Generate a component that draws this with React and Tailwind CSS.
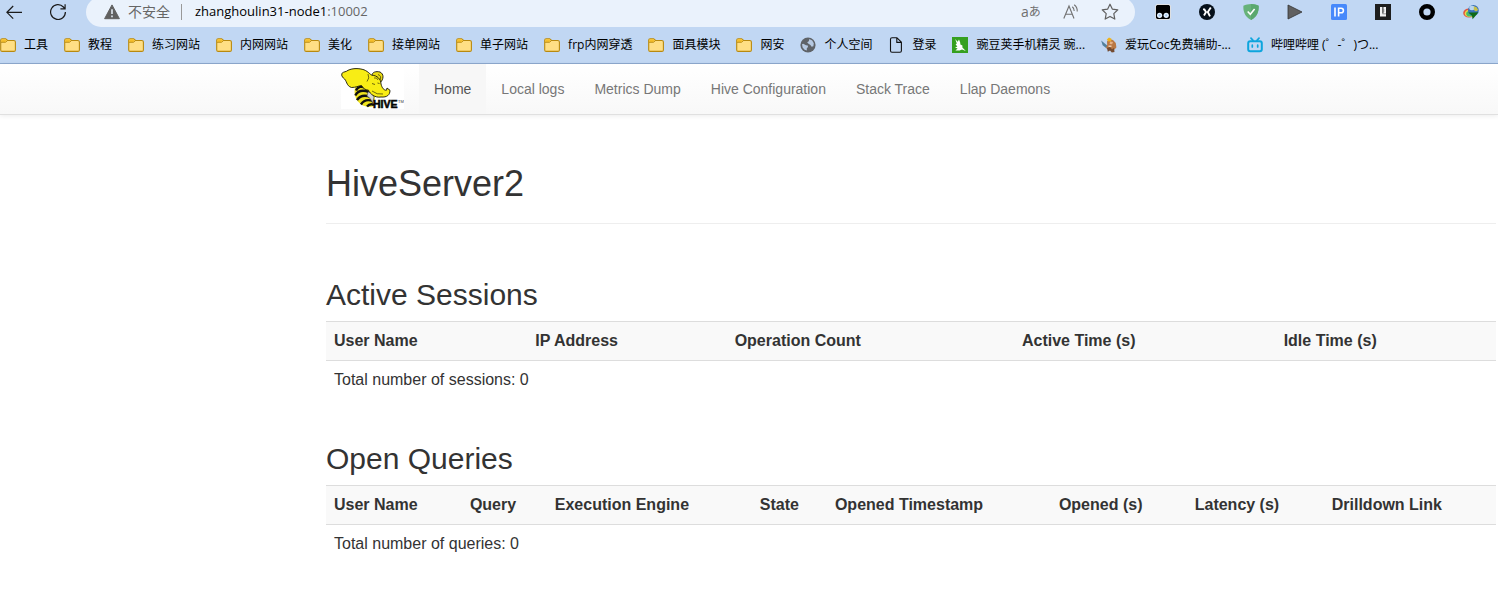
import React from "react";

function FolderIcon() {
  return (
    <svg viewBox="0 0 16 16" className="size-4 shrink-0" aria-hidden="true">
      <path d="M.7 3.2Q.7 1.7 2.2 1.7H5.6L7.6 3.5H13.8Q15.4 3.5 15.4 5V12.9Q15.4 14.4 13.9 14.4H2.2Q.7 14.4.7 12.9Z" fill="#ffdf85" stroke="#b8890f" strokeWidth="1.1" />
      <path d="M1.2 3.4Q1.2 2.2 2.3 2.2H5.4L6.9 3.6 5.4 5H1.2Z" fill="#f5bf2b" />
      <path d="M1 5.3H5.5L7.5 3.6" fill="none" stroke="#b8890f" strokeWidth="0.9" />
    </svg>
  );
}

function GlobeIcon() {
  return (
    <svg viewBox="0 0 16 16" className="size-4 shrink-0" aria-hidden="true">
      <circle cx="8" cy="8" r="7.6" fill="#5f6368" />
      <path d="M2 7.2 3.2 6.8 6 8.2 7.8 8.4 8 10 6.8 11.2 6.8 13.6 4.6 12.8 2.6 10.4Z" fill="#b6c9e2" />
      <path d="M9.3 2.1 12.2 3.4 13.8 6.2 13.4 9.2 11.6 9.8 10.4 8 8.2 6.6 7.2 5.2 8.8 4.2Z" fill="#b6c9e2" />
    </svg>
  );
}

function PageIcon() {
  return (
    <svg viewBox="0 0 16 16" className="size-4 shrink-0" fill="none" stroke="#111" strokeWidth="1.1" strokeLinejoin="round" aria-hidden="true">
      <path d="M4 .8H9L13.4 5.2V13.8Q13.4 15.3 12 15.3H4Q2.5 15.3 2.5 13.8V2.3Q2.5.8 4 .8ZM8.8 1V5.4H13.2" />
    </svg>
  );
}

function PeaIcon() {
  return (
    <svg viewBox="0 0 16 16" className="size-4 shrink-0" aria-hidden="true">
      <path d="M0 0H16V16H0Z" fill="#35a01f" />
      <path d="M3.2 2 5.6 4.8 7 2.6 8.2 5.4 8.4 7.4 10.4 8.6 10.4 10.6 13.8 14 10 12.4 7.6 13.4 3.4 13.6 5.6 11.6 3 10.6 5.4 9.4 3.6 7.4 4.8 6.4Z" fill="#fff" />
    </svg>
  );
}

function WarriorIcon() {
  return (
    <svg viewBox="0 0 16 16" className="size-4 shrink-0" aria-hidden="true">
      <path d="M.2 3.6 6.5 8.8 5.4 11.2 1.6 8.2Z" fill="#52809c" />
      <path d="M6 4.5 8 2 12 3 14.8 6 15.4 10.5 13.5 12.5H7L5 11 6.2 8Z" fill="#b97845" />
      <path d="M5.8 2.5 8 .4 10.5 1.7 10 4.2 7.4 4.6Z" fill="#efb31c" />
      <path d="M9 4.5 12 5 11.2 7.2 8.6 7Z" fill="#e7b186" />
      <path d="M6 11 9 10 11 12.2 13 11 13.5 15 10.8 15.6 9 13.6 6.8 14.8Z" fill="#744b31" />
      <path d="M7.5 8.5H10.5V10H7.5Z" fill="#e9cfb6" />
    </svg>
  );
}

function BiliIcon() {
  return (
    <svg viewBox="0 0 16 16" className="size-4 shrink-0" fill="none" stroke="#0da5dd" strokeLinecap="round" aria-hidden="true">
      <rect x="1.2" y="4.2" width="13.6" height="10" rx="2" strokeWidth="2" />
      <path d="M4 1.2 6 3.3M12 1.2 10 3.3" strokeWidth="1.7" />
      <path d="M5.3 8.2V10M10.7 8.2V10" strokeWidth="1.7" />
    </svg>
  );
}

const bookmarks = [
  { label: "工具", Icon: FolderIcon },
  { label: "教程", Icon: FolderIcon },
  { label: "练习网站", Icon: FolderIcon },
  { label: "内网网站", Icon: FolderIcon },
  { label: "美化", Icon: FolderIcon },
  { label: "接单网站", Icon: FolderIcon },
  { label: "单子网站", Icon: FolderIcon },
  { label: "frp内网穿透", Icon: FolderIcon },
  { label: "面具模块", Icon: FolderIcon },
  { label: "网安", Icon: FolderIcon },
  { label: "个人空间", Icon: GlobeIcon },
  { label: "登录", Icon: PageIcon },
  { label: "豌豆荚手机精灵 豌...", Icon: PeaIcon },
  { label: "爱玩Coc免费辅助-...", Icon: WarriorIcon },
  { label: "哔哩哔哩 (゜-゜)つ...", Icon: BiliIcon },
];

const extensions = [
  {
    name: "Tampermonkey",
    art: (
      <>
        <rect x="0.4" y="0.4" width="15.2" height="15.2" rx="2.5" fill="#000" stroke="#fff" strokeWidth="0.9" />
        <circle cx="4.6" cy="11.3" r="2.6" fill="#e4f1ff" />
        <circle cx="11.2" cy="11.3" r="2.6" fill="#e4f1ff" />
        <circle cx="4.6" cy="11.3" r="1.1" fill="#9ec4ea" />
        <circle cx="11.2" cy="11.3" r="1.1" fill="#9ec4ea" />
      </>
    ),
  },
  {
    name: "X",
    art: (
      <>
        <circle cx="8" cy="8" r="8" fill="#06101a" />
        <path d="M4 5.4H5.4L7 8 5 11.4M11.8 3.4 8.8 8 11 12.4" fill="none" stroke="#fff" strokeWidth="1.9" />
      </>
    ),
  },
  {
    name: "AdGuard",
    art: (
      <>
        <path d="M8 0C10.5.2 13.5.8 15.6 1.7 16 7.5 14 13 8 16 2 13 0 7.5.4 1.7 2.5.8 5.5.2 8 0Z" fill="#67b279" />
        <path d="M8 0C10.5.2 13.5.8 15.6 1.7 16 7.5 14 13 8 16Z" fill="#5aa86d" />
        <path d="M4.7 7.5 7.3 10.2 11.6 5" fill="none" stroke="#fff" strokeWidth="1.6" />
      </>
    ),
  },
  { name: "Play", art: <path d="M1 1 15 8 1 15Z" fill="#606060" stroke="#333" strokeWidth="0.8" /> },
  {
    name: "IP",
    art: (
      <>
        <rect width="16" height="16" rx="1.5" fill="#4789fb" />
        <path d="M4 3.5V12.5M7.6 12.5V4.2H10.2Q12.4 4.2 12.4 6.5T10.2 8.8H7.6" fill="none" stroke="#fff" strokeWidth="1.6" />
      </>
    ),
  },
  {
    name: "L",
    art: (
      <>
        <path d="M0 0H16V16H0Z" fill="#1e1e1e" />
        <path d="M5 3H7.4V9.4H8.4V3H11V12.4H5Z" fill="#f2f2f2" />
        <path d="M8.4 8H9.2V5H8.4ZM7.4 9.4H11V10.2H7.4Z" fill="#777" />
      </>
    ),
  },
  { name: "O", art: <circle cx="8" cy="8" r="5.8" fill="none" stroke="#000" strokeWidth="4.4" /> },
  {
    name: "IDM",
    art: (
      <>
        <ellipse cx="6" cy="9" rx="5.8" ry="4.6" fill="#e0553f" />
        <ellipse cx="6.3" cy="9.4" rx="4.6" ry="3.7" fill="#f0d548" />
        <ellipse cx="6.6" cy="9.8" rx="3.4" ry="2.8" fill="#45bd6b" />
        <circle cx="10.4" cy="6.4" r="5.4" fill="#3a72b8" />
        <ellipse cx="9" cy="4" rx="2.8" ry="2.2" fill="#b9d6ee" />
        <path d="M10.8 2.2 13.6 3.2 15.2 6 13 7.6 10.8 6Z" fill="#c9c14a" />
        <path d="M5.4 8.4 10.2 8.6 15.2 8.2 13.2 11 9.6 15.2 9 11.8Z" fill="#0f6a14" />
      </>
    ),
  },
];

function HiveLogo() {
  return (
    <svg viewBox="0 0 63 41" className="h-[41px] w-[63px]" role="img" aria-label="Hive">
      <path d="M0 0H63V41H0Z" fill="#fff" />
      <path d="M14.5 18.5C12.5 23 13 33 22 37.5 26 39.3 31 39 33 38L34 28 27 18Z" fill="#efe31e" />
      <path d="M15 22.5Q18 16.5 25 20M14.3 27.5Q18 20.5 28 24M16 32.2Q20 25.5 30 29M20 36.5Q24 30 32 33.2M26 38.6Q29 35 33 37" fill="none" stroke="#111" strokeWidth="2.4" />
      <path d="M27 24Q31 23 33 29L31.5 35Q30 30 26 28Z" fill="#d5d8db" stroke="#444" strokeWidth="0.6" />
      <path d="M31 7.5C31 4 35 3 39 4 43 6 43 11 39 15L35 13Z" fill="#eadb12" stroke="#111" strokeWidth="0.9" />
      <path d="M.8 5.5C3 3.2 5 4.2 7 2.3 12 0 18 .2 23 1.8 28 4 29 6.6 31 7.2 36 7.5 40 11 40 16 41 20 43 22.5 45.5 22.2L46 20 49 22.3C49 27 46 29.5 40 29 34 30 29 26 27.5 22.2 24 22 22 20 20.5 17.5 17 18 15 19.5 10.5 19.5 5 18 6 12 2.5 10.2Q0 8 .8 5.5Z" fill="#f8ed15" stroke="#151508" strokeWidth="0.9" />
      <path d="M27 6Q29 10 26 13.5M33 10Q36 9 37 12M31 15.5 34 16.5M36.5 15 38.5 15.5M31 23Q36 27 42 26M37 6.5Q41 8 39 12" fill="none" stroke="#302e08" strokeWidth="0.7" />
      <text x="32" y="39.5" fontFamily="Liberation Sans, sans-serif" fontWeight="700" fontSize="10.5" fill="#050505" stroke="#050505" strokeWidth="0.6">HIVE</text>
      <text x="57" y="34.5" fontFamily="Liberation Sans, sans-serif" fontSize="4" fill="#333">TM</text>
    </svg>
  );
}

function BrowserChrome() {
  return (
    <header className="overflow-hidden border-b border-[#8da9cf] bg-[#c1d7f3] font-['Open_Sans','Noto_Sans_CJK_SC',sans-serif]">
      <div className="-mt-[3px] flex h-[30px] items-center pr-[19px] pl-[6px]">
        <button type="button" aria-label="Back" className="mr-7">
          <svg viewBox="0 0 16 16" className="size-4" fill="none" stroke="#1b1b1b" strokeWidth="1.2">
            <path d="M16 8.3H.9M7.2 2 .9 8.3 7.2 14.6" />
          </svg>
        </button>
        <button type="button" aria-label="Refresh" className="mr-5">
          <svg viewBox="0 0 16 16" className="size-4" fill="none" stroke="#1b1b1b" strokeWidth="1.2">
            <path d="M15.4 8A7.4 7.4 0 1 1 13.4 3L15 4.8M15.1.2V4.9H10.4" />
          </svg>
        </button>
        <div className="flex h-full min-w-0 flex-1 items-center rounded-full bg-[#eaf2fc] pr-4 pl-[18px]">
          <svg viewBox="0 0 16 16" className="size-4 shrink-0" aria-hidden="true">
            <path d="M8 .9 15.4 14.7H.6Z" fill="#606060" stroke="#606060" strokeWidth="1" strokeLinejoin="round" />
            <path d="M8 5.2V10M8 11.5V13.2" stroke="#eaf2fc" strokeWidth="1.5" />
          </svg>
          <span className="ml-2 text-sm whitespace-nowrap text-[#666]">不安全</span>
          <span className="mr-[13px] ml-[11px] h-4 w-px bg-[#999]" />
          <label className="flex min-w-0 flex-1 items-center text-[13px] text-[#666]">
            <input aria-label="Address" defaultValue="zhanghoulin31-node1" className="field-sizing-content min-w-0 bg-transparent text-black outline-none" />
            <span>:10002</span>
          </label>
          <button type="button" aria-label="Translate" className="mr-6 flex w-[18px] items-center text-[#707070]">
            <span className="text-sm leading-4">a</span>
            <span className="text-xs leading-4">あ</span>
          </button>
          <button type="button" aria-label="Read aloud" className="mr-[22px]">
            <svg viewBox="0 0 16 16" className="size-4" fill="none" stroke="#707070" strokeWidth="1.1">
              <path d="M.8 14.5 6 2 11 14.5M2.7 10.2H9.3M9.3 2.8Q11.3 4.4 11.2 7M11.2.8Q14.6 3.5 14.2 7.5" />
            </svg>
          </button>
          <button type="button" aria-label="Add to favorites">
            <svg viewBox="0 0 18 18" className="size-[18px]" fill="none" stroke="#606060" strokeWidth="1.2" strokeLinejoin="round">
              <path d="M9 1.2 11.3 6.1 16.8 6.8 12.8 10.6 13.8 16.1 9 13.4 4.2 16.1 5.2 10.6 1.2 6.8 6.7 6.1Z" />
            </svg>
          </button>
        </div>
        <div className="ml-5 flex items-center gap-7">
          {extensions.map((ext) => (
            <button key={ext.name} type="button" aria-label={ext.name}>
              <svg viewBox="0 0 16 16" className="size-4">{ext.art}</svg>
            </button>
          ))}
        </div>
      </div>
      <nav aria-label="Bookmarks" className="flex h-9 items-center gap-4 text-xs text-black">
        {bookmarks.map(({ label, Icon }) => (
          <a key={label} href="#bookmark" className="flex shrink-0 items-center gap-2 whitespace-nowrap">
            <Icon />
            {label}
          </a>
        ))}
      </nav>
    </header>
  );
}

const links = ["Home", "Local logs", "Metrics Dump", "Hive Configuration", "Stack Trace", "Llap Daemons"];

function Navbar() {
  return (
    <nav className="flex h-[51px] items-stretch border-b border-[#e0e0e0] bg-linear-to-b from-white to-[#f8f8f8] pl-[326px] shadow-[0_1px_5px_rgba(0,0,0,0.08)]">
      <a href="#home" className="flex items-center px-[15px] pb-0.5">
        <HiveLogo />
      </a>
      {links.map((label, i) => (
        <a
          key={label}
          href="#page"
          className={
            i === 0
              ? "flex items-center bg-[#f7f7f7] px-[15px] text-sm whitespace-nowrap text-[#555]"
              : "flex items-center px-[15px] text-sm whitespace-nowrap text-[#777]"
          }
        >
          {label}
        </a>
      ))}
    </nav>
  );
}

function Section({ title, columns, total }) {
  return (
    <section>
      <h2 className="mb-2 text-[30px] leading-9">{title}</h2>
      <table className="w-full text-left text-base leading-[22px]">
        <thead>
          <tr className="border-y border-[#ddd] bg-[#f9f9f9]">
            {columns.map((column) => (
              <th key={column} className="p-2 font-bold whitespace-nowrap">{column}</th>
            ))}
          </tr>
        </thead>
        <tbody>
          <tr>
            <td colSpan={columns.length} className="p-2">{total}</td>
          </tr>
        </tbody>
      </table>
    </section>
  );
}

export default function App() {
  return (
    <div className="min-h-screen bg-white font-['Liberation_Sans',Arial,sans-serif] text-[#333]">
      <BrowserChrome />
      <Navbar />
      <main className="pt-[49px] pr-0.5 pb-9 pl-[326px]">
        <h1 className="border-b border-[#eee] pb-[19px] text-4xl">HiveServer2</h1>
        <div className="flex flex-col gap-[42px] pt-[53px]">
          <Section
            title="Active Sessions"
            columns={["User Name", "IP Address", "Operation Count", "Active Time (s)", "Idle Time (s)"]}
            total="Total number of sessions: 0"
          />
          <Section
            title="Open Queries"
            columns={["User Name", "Query", "Execution Engine", "State", "Opened Timestamp", "Opened (s)", "Latency (s)", "Drilldown Link"]}
            total="Total number of queries: 0"
          />
        </div>
      </main>
    </div>
  );
}
